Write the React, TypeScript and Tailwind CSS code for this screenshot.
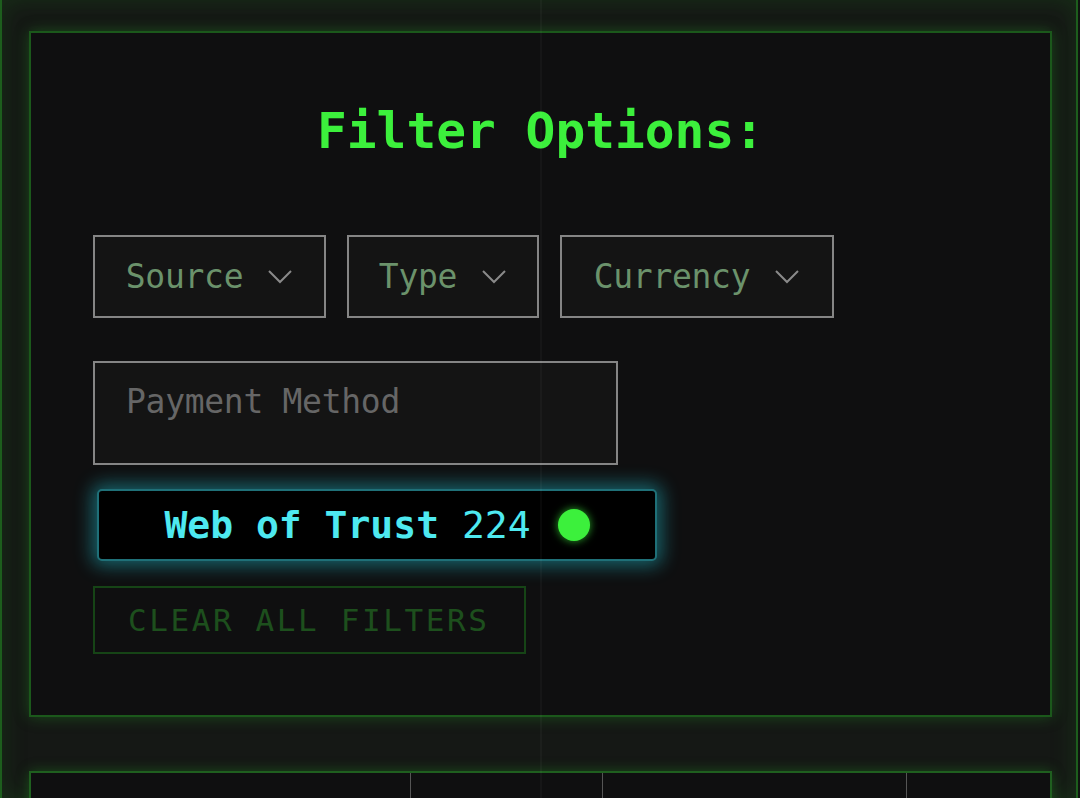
import React from "react";

function Chevron() {
  return (
    <svg width="26" height="16" viewBox="0 0 26 16" fill="none" className="shrink-0">
      <path d="M2 2 L13 13 L24 2" stroke="#8a8a8a" strokeWidth="2" />
    </svg>
  );
}

function Dropdown({ label, w }: { label: string; w: string }) {
  return (
    <div
      className={`${w} h-[83px] border-2 border-[#858585] bg-[#141414] flex items-center justify-center gap-[24px]`}
    >
      <span className="text-[33px] leading-none tracking-[-0.3px] text-[#6b926b]">{label}</span>
      <Chevron />
    </div>
  );
}

export default function App() {
  return (
    <div
      className="w-[1080px] h-[798px] overflow-hidden bg-[#101210] relative"
      style={{ fontFamily: '"DejaVu Sans Mono", "Liberation Mono", monospace' }}
    >
      <div className="w-[1078px] h-full border-x-2 border-[#1d5e1d] bg-[#151815] pl-[27px] pr-[24px] pt-[31px] shadow-[inset_0_0_24px_rgba(30,120,30,0.25)]">
        {/* panel */}
        <div className="w-[1023px] h-[686px] border-2 border-[#1b581b] bg-[#0f0f10] shadow-[0_0_14px_rgba(40,170,40,0.35)] pl-[62px] pt-[74px]">
          <div className="-ml-[62px] text-center text-[49.5px] font-bold leading-none text-[#3cf03c] h-[56px]">
            Filter Options:
          </div>
          <div className="mt-[72px] flex gap-[21px]">
            <Dropdown label="Source" w="w-[233px]" />
            <Dropdown label="Type" w="w-[192px]" />
            <Dropdown label="Currency" w="w-[274px]" />
          </div>
          <div className="mt-[43px] w-[525px] h-[104px] border-2 border-[#858585] bg-[#141414] pl-[31px] pt-[22px]">
            <span className="text-[33px] leading-none tracking-[-0.3px] text-[#666]">Payment Method</span>
          </div>
          <div className="mt-[24px] ml-[4px] w-[560px] h-[72px] rounded-[5px] bg-black border-2 border-[#1f7078] shadow-[0_0_18px_5px_rgba(34,200,215,0.45)] flex items-center justify-center gap-[27px]">
            <span className="text-[38px] leading-none text-[#4ee9f0]">
              <span className="font-bold">Web of Trust</span> 224
            </span>
            <span className="w-[32px] h-[32px] rounded-full bg-[#3cf03c] shadow-[0_0_8px_rgba(60,240,60,0.7)]" />
          </div>
          <div className="mt-[25px] w-[433px] h-[68px] border-2 border-[#164416] flex items-center pl-[33px]">
            <span className="text-[31px] leading-none tracking-[2.6px] text-[#1d4f1d]">CLEAR ALL FILTERS</span>
          </div>
        </div>
        {/* table */}
        <div className="mt-[54px] w-[1023px] border-2 border-[#1f5f1f] shadow-[0_0_12px_rgba(40,170,40,0.35)] bg-[#0f0f10] grid grid-cols-[380px_192px_304px_1fr] h-[80px]">
          <div className="border-r border-[#555]" />
          <div className="border-r border-[#555]" />
          <div className="border-r border-[#555]" />
          <div />
        </div>
      </div>
      <div className="absolute top-0 left-[540px] w-[2px] h-full bg-white/[0.03] pointer-events-none" />
    </div>
  );
}
